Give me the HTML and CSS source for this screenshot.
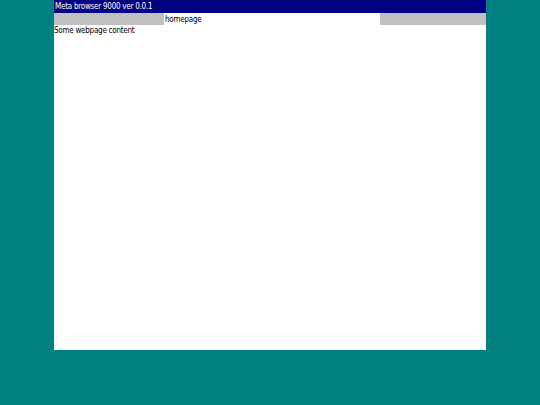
FILE: index.html
```html
<!DOCTYPE html>
<html>
<head>
<meta charset="utf-8">
<link rel="stylesheet" href="styles.css">
</head>
<body>
<div class="window">
  <div class="titlebar">Meta browser 9000 ver 0.0.1</div>
  <div class="addressbar">
    <div class="btns"></div>
    <div class="url">homepage</div>
    <div class="tools"></div>
  </div>
  <div class="content">Some webpage content</div>
</div>
</body>
</html>
```

FILE: styles.css
```css
html, body {
  margin: 0;
  padding: 0;
  height: 100%;
}
body {
  background: #008080;
  font-family: "DejaVu Sans Condensed", "DejaVu Sans", sans-serif;
  font-size: 8px;
  letter-spacing: -0.25px;
}
.window {
  margin-left: 54px;
  width: 432px;
  height: 350px;
  background: #ffffff;
  display: flex;
  flex-direction: column;
}
.titlebar {
  height: 13px;
  line-height: 13px;
  background: #000080;
  color: #ffffff;
  padding-left: 1px;
}
.addressbar {
  height: 12px;
  display: flex;
  line-height: 13px;
}
.btns {
  width: 110px;
  background: #c0c0c0;
}
.url {
  flex: 1;
  padding-left: 1px;
  color: #000;
}
.tools {
  width: 106px;
  background: #c0c0c0;
}
.content {
  flex: 1;
  line-height: 11px;
  color: #000;
}
```
